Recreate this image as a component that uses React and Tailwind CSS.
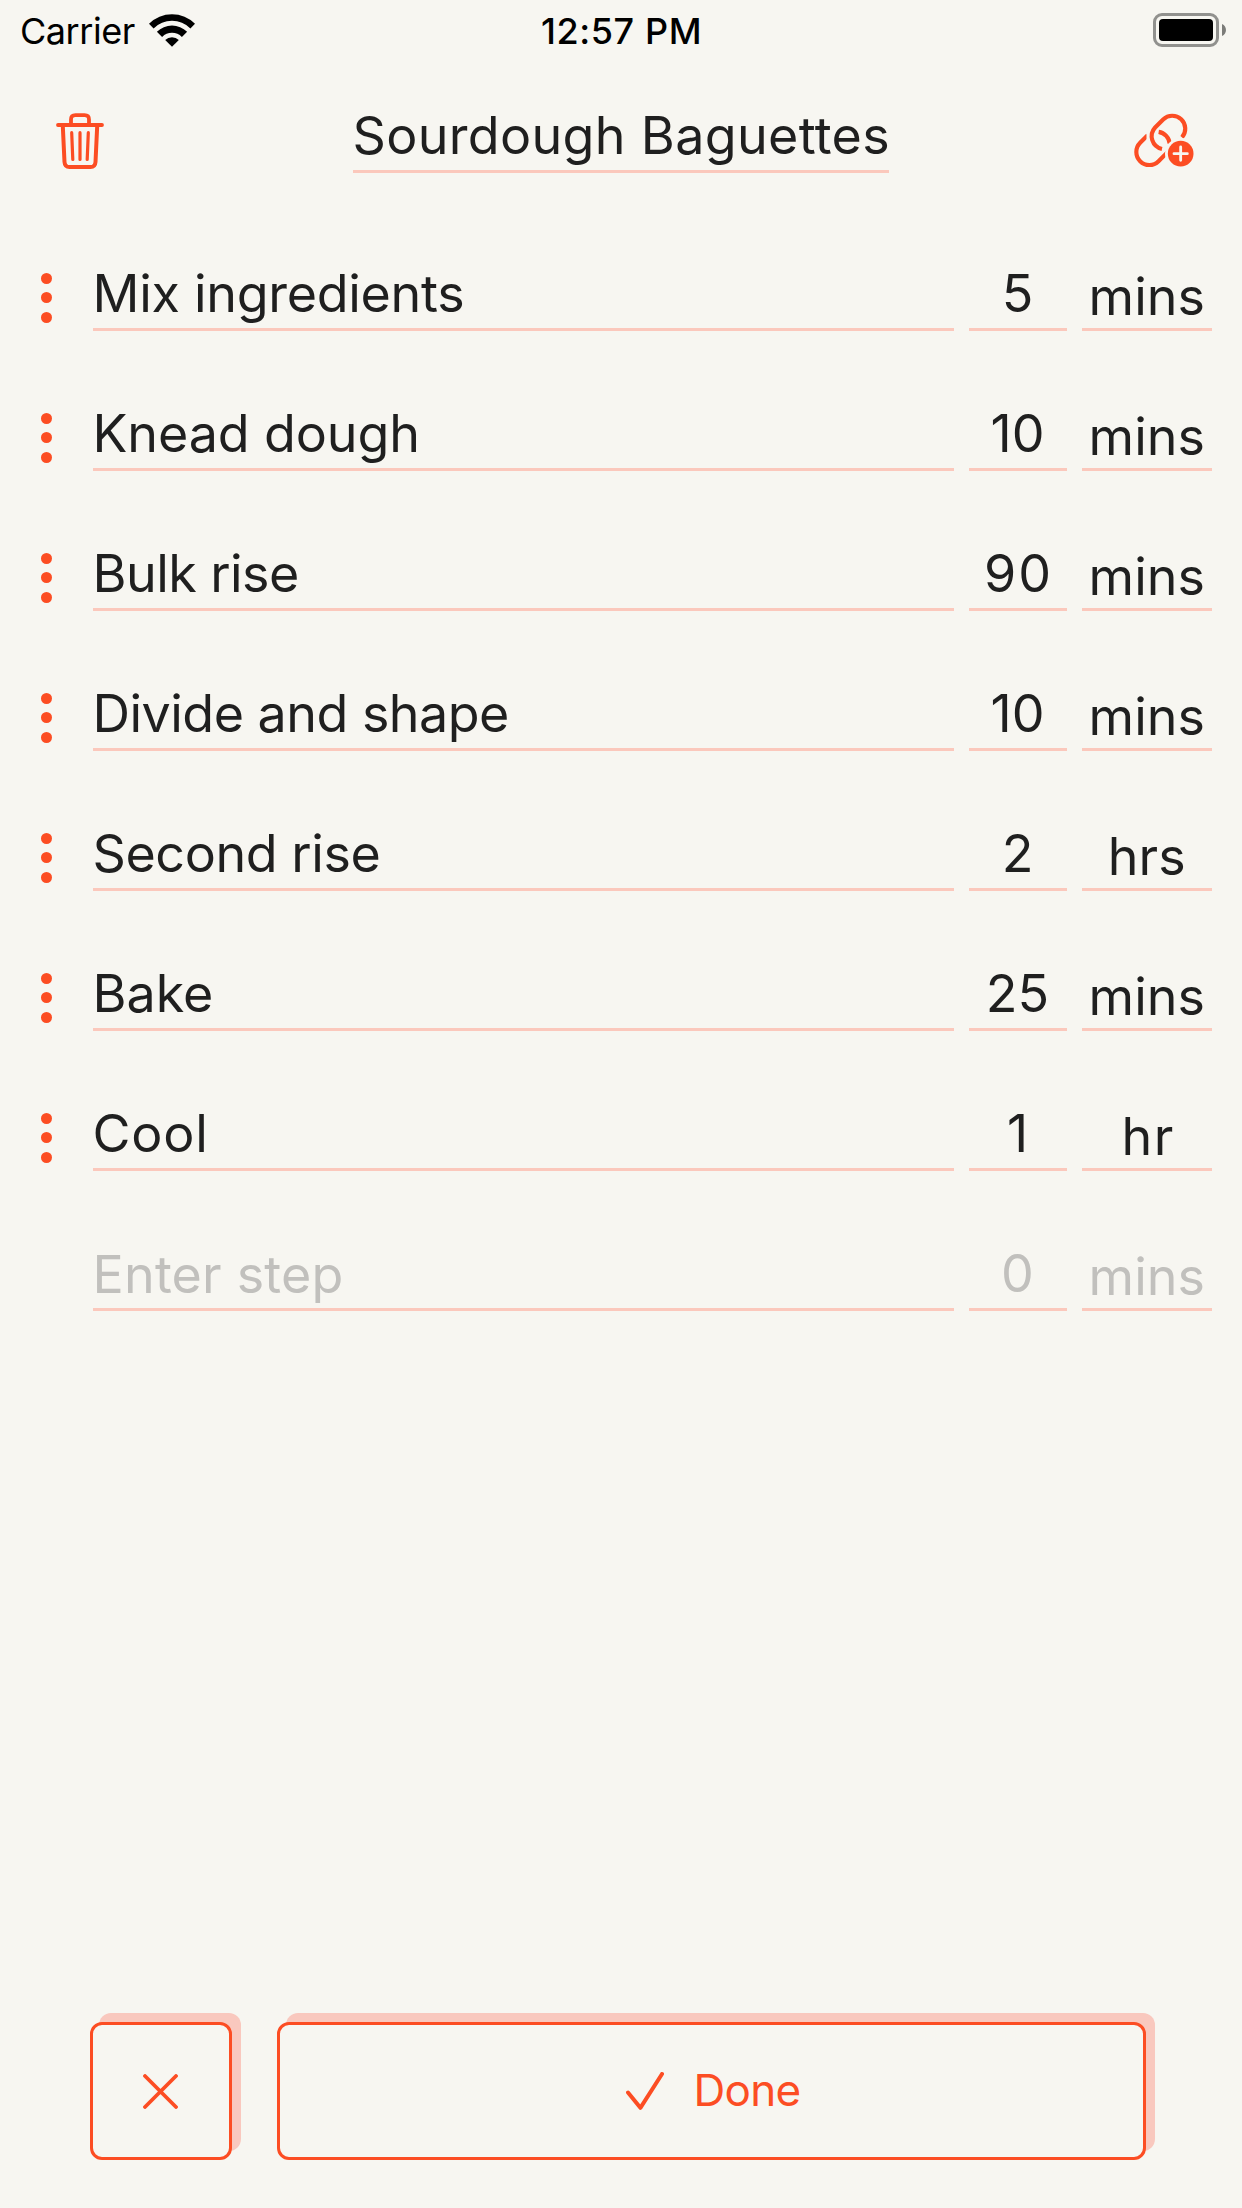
import React from "react";

const steps = [
  { name: "Mix ingredients", track: "tracking-[-0.29px]", amount: "5", unit: "mins" },
  { name: "Knead dough", track: "tracking-[-0.1px]", amount: "10", unit: "mins" },
  { name: "Bulk rise", track: "tracking-[-0.56px]", amount: "90", amountTrack: "tracking-[2px] pl-[2px]", unit: "mins" },
  { name: "Divide and shape", track: "tracking-[-0.52px]", amount: "10", unit: "mins" },
  { name: "Second rise", track: "tracking-[-0.42px]", amount: "2", unit: "hrs" },
  { name: "Bake", track: "tracking-normal", amount: "25", unit: "mins" },
  { name: "Cool", track: "tracking-[0.8px]", amount: "1", unit: "hr", unitTrack: "tracking-[1.5px] pl-[3px]" },
  { name: "Enter step", track: "tracking-[0.2px]", amount: "0", unit: "mins", placeholder: true },
];

function WifiIcon() {
  return (
    <svg width="46" height="33" viewBox="447 39 138 98" className="ml-[14px]">
      <path d="M446.7 67.7A98 98 0 0 1 585.3 67.7L571.2 81.8A78 78 0 0 0 460.8 81.8Z" />
      <path d="M470.7 91.7A65 65 0 0 1 561.3 91.7L545.7 107.3A42 42 0 0 0 486.3 107.3Z" />
      <path d="M495.5 116.5A30 30 0 0 1 536.5 116.5L516 137Z" />
    </svg>
  );
}

function Battery() {
  return (
    <div className="flex items-center gap-[3px]">
      <div className="h-[34px] w-[66px] rounded-[9px] border-3 border-[#91918e] p-[3px]">
        <div className="h-full w-full rounded-[4px] bg-black" />
      </div>
      <svg width="4" height="12" viewBox="0 0 4 12">
        <path d="M0 0C5.3 2 5.3 10 0 12Z" fill="#7c7c79" />
      </svg>
    </div>
  );
}

function TrashIcon() {
  return (
    <svg width="48" height="57" viewBox="56 113 48 57" fill="none" stroke="#fc4d23" strokeLinecap="round" strokeLinejoin="round">
      <path strokeWidth="3.8" d="M58 125H102M71 124V119.5Q71 115.2 75.5 115.2H84.5Q89 115.2 89 119.5V124" />
      <path strokeWidth="4" d="M62.8 126L64.5 162Q64.8 167 69.5 167H90.5Q95.2 167 95.5 162L97.2 126" />
      <path strokeWidth="3.2" d="M71.7 132.7L72.8 159.5M80 132.7V159.5M88.3 132.7L87.2 159.5" />
    </svg>
  );
}

function LinkIcon() {
  return (
    <svg width="60" height="55" viewBox="162 341 180 165" fill="none" stroke="#fc4d23" strokeWidth="12.5">
      <path d="M306 414A39 39 0 0 0 249.4 360.4L225.4 384.4A39 39 0 0 0 246 449" />
      <path d="M262 459.2L235.6 485.6A39 39 0 0 1 180.4 430.4L203 407.8" />
      <path d="M236 397.5A39 39 0 0 1 269 433" />
      <path d="M203.5 395V425" stroke="#f7f6f1" strokeWidth="8" />
      <circle cx="302" cy="463" r="47" fill="#f7f6f1" stroke="none" />
      <circle cx="302" cy="463" r="38.5" fill="#fc4d23" stroke="none" />
      <path d="M282 463H322M302 443V483" stroke="#f7f6f1" strokeWidth="8.5" strokeLinecap="round" />
    </svg>
  );
}

function Handle() {
  return (
    <div className="flex h-[50px] w-[11px] flex-col justify-between">
      <span className="size-[11px] rounded-full bg-[#fc4d23]" />
      <span className="size-[11px] rounded-full bg-[#fc4d23]" />
      <span className="size-[11px] rounded-full bg-[#fc4d23]" />
    </div>
  );
}

function Step({ step }) {
  const color = step.placeholder ? "text-[#c1c0bd]" : "text-[#1f1f1f]";
  return (
    <div className={`flex h-[68px] items-center text-[52px] leading-[60px] ${color}`}>
      <div className="w-[52px] shrink-0 pt-px">{!step.placeholder && <Handle />}</div>
      <div className={`h-full w-[861px] border-b-3 border-[#fbc8bc] indent-[-0.5px] ${step.placeholder ? "pt-[2px]" : "pt-px"} ${step.track}`}>
        {step.name}
      </div>
      <div className={`ml-[15px] h-full w-[98px] border-b-3 border-[#fbc8bc] pt-px text-center indent-[-1px] ${step.amountTrack || ""}`}>
        {step.amount}
      </div>
      <div className={`ml-[15px] h-full w-[130px] border-b-3 border-[#fbc8bc] pt-[4px] text-center indent-[-0.5px] ${step.unitTrack || ""}`}>
        {step.unit}
      </div>
    </div>
  );
}

export default function App() {
  return (
    <div className="flex h-[2208px] w-[1242px] flex-col bg-[#f7f6f1] font-['Inter',sans-serif]">
      <div className="grid h-[60px] grid-cols-3 items-center pr-[16px] pl-[20px] text-[36px] text-black">
        <div className="flex items-center tracking-[-0.45px]">
          <span className="pt-[2px]">Carrier</span>
          <WifiIcon />
        </div>
        <div className="pt-[2px] pr-[3px] text-center font-[550] tracking-[0.6px]">12:57 PM</div>
        <div className="flex justify-end">
          <Battery />
        </div>
      </div>

      <header className="flex h-[203px] items-start justify-between pt-[45px] pr-[48px] pl-[56px]">
        <button className="mt-[8px] w-[60px]"><TrashIcon /></button>
        <h1 className="mr-[9px] h-[68px] w-[536px] border-b-3 border-[#fbc8bc] pt-px text-[52px] leading-[60px] tracking-[0.33px] whitespace-nowrap text-[#1f1f1f]">
          Sourdough Baguettes
        </h1>
        <button className="mt-[8px]"><LinkIcon /></button>
      </header>

      <main className="flex flex-1 flex-col gap-[72px] pl-[41px]">
        {steps.map((s) => (
          <Step key={s.name} step={s} />
        ))}
      </main>

      <footer className="flex gap-[45px] pb-[48px] pl-[90px]">
        <button className="flex h-[138px] w-[142px] items-center justify-center rounded-[12px] border-3 border-[#fc4d23] bg-[#f7f6f1] shadow-[9px_-9px_0_0_#f9c8be]">
          <svg width="35" height="35" viewBox="0 0 35 35" fill="none" stroke="#fc4d23" strokeWidth="3.8" strokeLinecap="round" className="mr-px">
            <path d="M2 2L33 33M33 2L2 33" />
          </svg>
        </button>
        <button className="flex h-[138px] w-[869px] items-center justify-center gap-[29px] rounded-[12px] border-3 border-[#fc4d23] bg-[#f7f6f1] pl-[4px] text-[44px] tracking-[-0.67px] text-[#fc4d23] shadow-[9px_-9px_0_0_#f9c8be]">
          <svg width="38" height="38" viewBox="0 0 38 38" fill="none" stroke="#fc4d23" strokeWidth="4" strokeLinecap="round" strokeLinejoin="round">
            <path d="M2 20.5L14.4 35.8L36 2" />
          </svg>
          <span className="pb-[3px]">Done</span>
        </button>
      </footer>
    </div>
  );
}
